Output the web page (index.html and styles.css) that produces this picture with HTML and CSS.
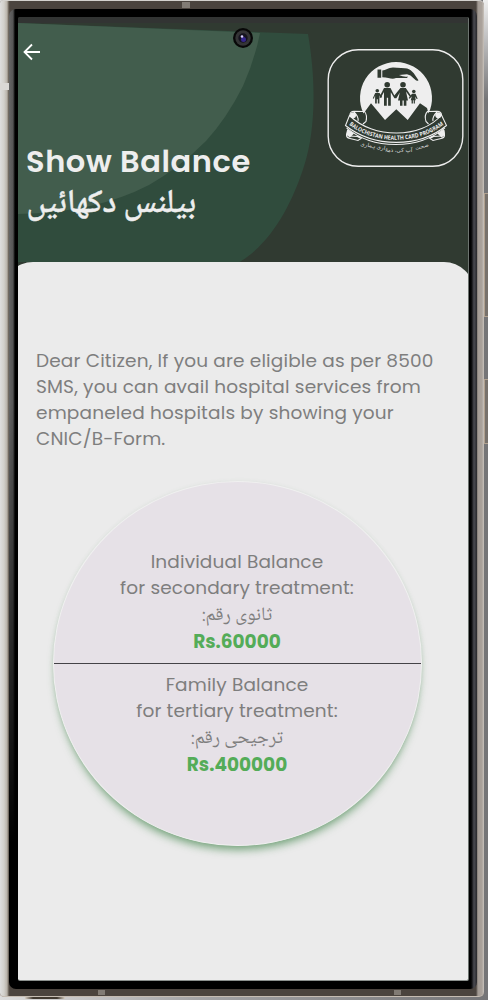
FILE: index.html
```html
<!DOCTYPE html>
<html lang="en">
<head>
<meta charset="utf-8">
<title>Show Balance</title>
<link rel="stylesheet" href="styles.css">
</head>
<body>
<div class="phone">
  <i class="band band-top"></i><i class="band band-left"></i><i class="band band-bottom-left"></i><i class="band band-bottom-right"></i>
  <div class="bezel">
    <main class="screen">
      <header class="header">
        <svg class="shapes" viewBox="0 0 451 245" aria-hidden="true">
          <path fill="#304c3d" d="M0 6 290 17C300 75 295 120 287 146C273 192 250 229 220 246H0Z"/>
          <path fill="#425d4d" d="M0 6 242 16Q237 42 225 69Q209 101 188 124Q161 151 131 168Q77 196 0 197Z"/>
        </svg>
        <div class="heading">
          <svg class="back" viewBox="0 0 18 18"><path d="M17 9H1.5M9 1.5 1.5 9 9 16.5"/></svg>
          <h1 class="title">Show Balance</h1>
          <p class="title-ur" lang="ur" dir="rtl">بیلنس دکھائیں</p>
        </div>
        <svg class="logo" viewBox="327 48 137 120">
          <rect x="328.2" y="49.7" width="134.6" height="116.6" rx="30" fill="none" stroke="#eee" stroke-width="1.4"/>
          <path fill="#eee" d="M363.5 113.5A36 36 0 1 1 428.5 113.5L427 108 420 103.3 407.7 120 396.3 109.3 385 120 371 103.3Z"/>
          <g fill="#303a31">
            <path d="M377.5 69.5h3.7v8.2h-3.7zM382.3 70.5C386 70.5 388 68 393 67.6L405 68.2C411 68.5 414 73 418.5 80.2Q417 81.5 415.5 80L410.5 75.5 407 74.3 399 75Q404 77.3 408 76.5L407 78H396C392 80 389 77.5 382.3 77.3Z"/>
            <circle cx="387.2" cy="84.7" r="2.8"/><circle cx="403" cy="84.7" r="2.8"/><circle cx="377.3" cy="90.8" r="1.8"/><circle cx="413.8" cy="91.5" r="1.8"/>
            <path d="M384 88h6.5l3.8 7.5L398 91l2.4-3h5.4l5.7 8.5-1.1 1-4.4-6 2 9h-1.6v5.2h-2.6v-5.2h-1.3v5.2H400v-5.2h-2l1.8-8-3.4 5.7h-2l-3.6-6v13.5h-2.7v-8h-1.3v8h-2.8V92l-3.4 6-1.3-.8z"/>
            <path d="M375.2 93h4.3l2.7 4-1 .8-1.8-2.2v7.8h-1.6v-4.2h-1v4.2h-1.7v-7.8l-1.3 3.2-1-.5zM412 93.7h3.5l2.2 5-1 .4-1.7-2.6.8 3.7h-.9v3.4h-1.2v-3.4h-.8v3.4h-1.3v-3.4h-.8l1-4-2.2 2.6-.9-.8z"/>
          </g>
          <g fill="none" stroke="#eee" stroke-width="1.1">
            <path d="M349.5 115.5 345.5 125.5C374 148 419 148 446.5 125.5L441.5 115C421 139 373 139 349.5 115.5Z"/>
            <path d="M350 115Q350 111.5 354 111.3L364.5 111.5Q367.5 115 366 121.5L363 124M441.5 115Q441.5 111.5 437 111.3L427.5 111.5Q424 115 426 121.5L428.5 124M354 112Q359 117 358 121M437 112Q432 117 433 121"/>
            <path d="M348 128.5 346.5 134.5Q346 137.5 350 138.5L358 140.5 361 138.5 357.5 136.5 349 136M443.5 128.5 444.5 134.5Q445 137.5 441 138.5L433 140.5 430 138.5 433.5 136.5 442 136M346.5 127.8C373 150 418 150 445 127.8"/>
          </g>
          <g fill="#eee"><circle cx="353" cy="115.3" r="3"/><circle cx="438.3" cy="115.3" r="3"/><path d="M347.5 129 354 133.5 350 137.5 346.5 135zM444 129l-6.5 4.5 4 4 3.5-2.5z"/></g>
          <path id="ribbon" fill="none" d="M348.2 124.2C374 145 418 145 444.5 124.2"/>
          <text class="ribbon-text"><textPath href="#ribbon" textLength="101" lengthAdjust="spacingAndGlyphs" startOffset="1">BALOCHISTAN HEALTH CARD PROGRAM</textPath></text>
          <text class="motto" transform="rotate(10 374 147)" x="374" y="148">داری ہماری</text>
          <text class="motto" x="398.5" y="152">آپ کی، ذمہ</text>
          <text class="motto" transform="rotate(-16 421 147)" x="422" y="148.5">صحت</text>
        </svg>
      </header>
      <section class="sheet">
        <p class="intro">
          <span>Dear Citizen, If you are eligible as per 8500</span>
          <span>SMS, you can avail hospital services from</span>
          <span>empaneled hospitals by showing your</span>
          <span>CNIC/B-Form.</span>
        </p>
        <div class="disc">
          <div class="half upper">
            <span>Individual Balance</span>
            <span>for secondary treatment:</span>
            <span class="ur" lang="ur" dir="rtl">ثانوی رقم:</span>
            <strong>Rs.60000</strong>
          </div>
          <div class="half">
            <span>Family Balance</span>
            <span>for tertiary treatment:</span>
            <span class="ur" lang="ur" dir="rtl">ترجیحی رقم:</span>
            <strong>Rs.400000</strong>
          </div>
        </div>
      </section>
    </main>
  </div>
  <svg class="camera" viewBox="0 0 22 22"><circle cx="11" cy="11" r="10" fill="#080808"/><circle cx="11" cy="11" r="7.7" fill="#343436"/><circle cx="11" cy="11" r="4.7" fill="#15131f"/><circle cx="11.5" cy="12.5" r="2.5" fill="#35258d"/><circle cx="10" cy="9.5" r="1.3" fill="#d9cfff"/></svg>
  <i class="key volume"></i><i class="key power"></i><i class="port"></i>
</div>
</body>
</html>
```

FILE: styles.css
```css
* { box-sizing: border-box; }
body {
  margin: 0;
  height: 1000px;
  overflow: hidden;
  background: linear-gradient(90deg, #dcdcdc, #a4a4a6 40%, #757577);
  font-family: Poppins, Inter, "DejaVu Sans", sans-serif;
}
body::before {
  content: "";
  position: absolute;
  right: 0;
  top: 0;
  width: 5px;
  height: 100px;
  background: linear-gradient(#eee, #757577);
}
.phone {
  position: relative;
  width: 484px;
  height: 997px;
  padding: 8px 7px 8px 9px;
  border-radius: 3px 5px 5px 4px;
  border-top: 1px solid #d4d2ce;
  border-bottom: 1px solid #c5bcb2;
  background:
    linear-gradient(90deg, #dedede 0, #d2d0cb 4px, #b9b3aa 7px, #5a5249 9px, transparent 10px),
    linear-gradient(270deg, #c9c3bc 0, #aba39c 2px, #a39b94 6px, transparent 8px),
    #4b443e;
}
.bezel {
  height: 980px;
  padding: 8px 8.5px 8px 8.5px;
  border-radius: 7px;
  background:
    linear-gradient(270deg, #28282b 0, #4a4a50 3px, #151517 5px, transparent 6px),
    linear-gradient(transparent 40%, #000 85%),
    linear-gradient(90deg, #666 0, #555 4px, #000 6px);
}
.screen {
  display: flex;
  flex-direction: column;
  width: 451px;
  height: 964px;
  overflow: hidden;
  border-radius: 2px;
  border-right: 1px solid #6d7470;
  border-bottom: 1px solid #8b908d;
  background: #303a31;
}
.header {
  position: relative;
  display: flex;
  flex: 0 0 245px;
  justify-content: space-between;
  border-top: 6px solid #323433;
}
.shapes {
  position: absolute;
  left: 0;
  top: -6px;
  width: 451px;
  height: 245px;
}
.heading {
  position: relative;
  display: flex;
  flex-direction: column;
  align-items: flex-start;
  padding: 20px 0 0 5px;
  color: #eee;
}
.back {
  width: 18px;
  height: 18px;
  fill: none;
  stroke: #fff;
  stroke-width: 1.8;
}
.title {
  margin: 80px 0 0 3.5px;
  font-size: 30.5px;
  font-weight: 600;
  line-height: 41px;
  white-space: nowrap;
  letter-spacing: 0.57px;
}
.title-ur {
  margin: 2px 0 0 4px;
  font-family: "Noto Naskh Arabic", "Noto Sans Arabic", "DejaVu Sans", sans-serif;
  font-size: 33px;
  font-weight: 500;
  line-height: 42px;
  white-space: nowrap;
  -webkit-text-stroke: 0.5px #eee;
}
.logo {
  position: relative;
  width: 137px;
  height: 120px;
  margin: 25px 4px 0 0;
}
.ribbon-text {
  fill: #eee;
  font: 700 5.8px "Open Sans", sans-serif;
}
.motto {
  fill: #ddd;
  font: 5.5px "DejaVu Sans", sans-serif;
  text-anchor: middle;
}
.sheet {
  flex: 1;
  display: flex;
  flex-direction: column;
  position: relative;
  margin: 0 -6px 0 -15px;
  padding: 85.5px 0 0 33.5px;
  border-radius: 30px 30px 0 0;
  background: #ebebeb;
}
.intro {
  display: flex;
  flex-direction: column;
  margin: 0;
  color: #7e7e7e;
  font-size: 18.5px;
  letter-spacing: 0.16px;
  line-height: 26px;
  white-space: nowrap;
}
.disc {
  width: 369px;
  height: 365px;
  margin: 29.5px 0 0 16.5px;
  border: 1px solid #f0f0f0;
  border-radius: 50%;
  background: #e6e1e7;
  box-shadow: 0 7px 9px -3px rgba(45, 120, 55, .6), 0 0 4px rgba(80, 140, 90, .08);
  color: #7e7e7e;
  font-size: 18.5px;
  letter-spacing: 0.14px;
  text-align: center;
}
.half {
  display: flex;
  flex-direction: column;
  align-items: center;
  padding-top: 8px;
  line-height: 26px;
  white-space: nowrap;
}
.upper {
  height: 182px;
  padding-top: 67px;
  border-bottom: 1px solid #444347;
}
.half strong {
  color: #54ac58;
  font-weight: 700;
  letter-spacing: 0;
}
.ur {
  height: 28px;
  padding-top: 2px;
  font-family: "Noto Naskh Arabic", "Noto Sans Arabic", "DejaVu Sans", sans-serif;
  font-size: 19px;
  letter-spacing: 0;
}
.camera {
  position: absolute;
  left: 232px;
  top: 26px;
  width: 22px;
  height: 22px;
}
.band {
  position: absolute;
  background: #817b74;
}
.band-top { left: 182px; top: 1px; width: 8px; height: 6px; }
.band-left { left: 0; top: 82px; width: 9px; height: 7px; background: #dad8d5; }
.band-bottom-left { left: 98px; bottom: 1px; width: 7px; height: 5px; }
.band-bottom-right { left: 394px; bottom: 1px; width: 7px; height: 5px; }
.key {
  position: absolute;
  left: 484px;
  width: 4px;
  border: 1px solid #b1a18f;
  border-right: 0;
  background: #77716b;
}
.volume { top: 192px; height: 124px; }
.power { top: 378px; height: 65px; }
.port {
  position: absolute;
  left: 25px;
  top: 996px;
  width: 40px;
  height: 2px;
  background: linear-gradient(90deg, #d6cec3, #403930 20%, #403930 80%, #d6cec3);
}
```
